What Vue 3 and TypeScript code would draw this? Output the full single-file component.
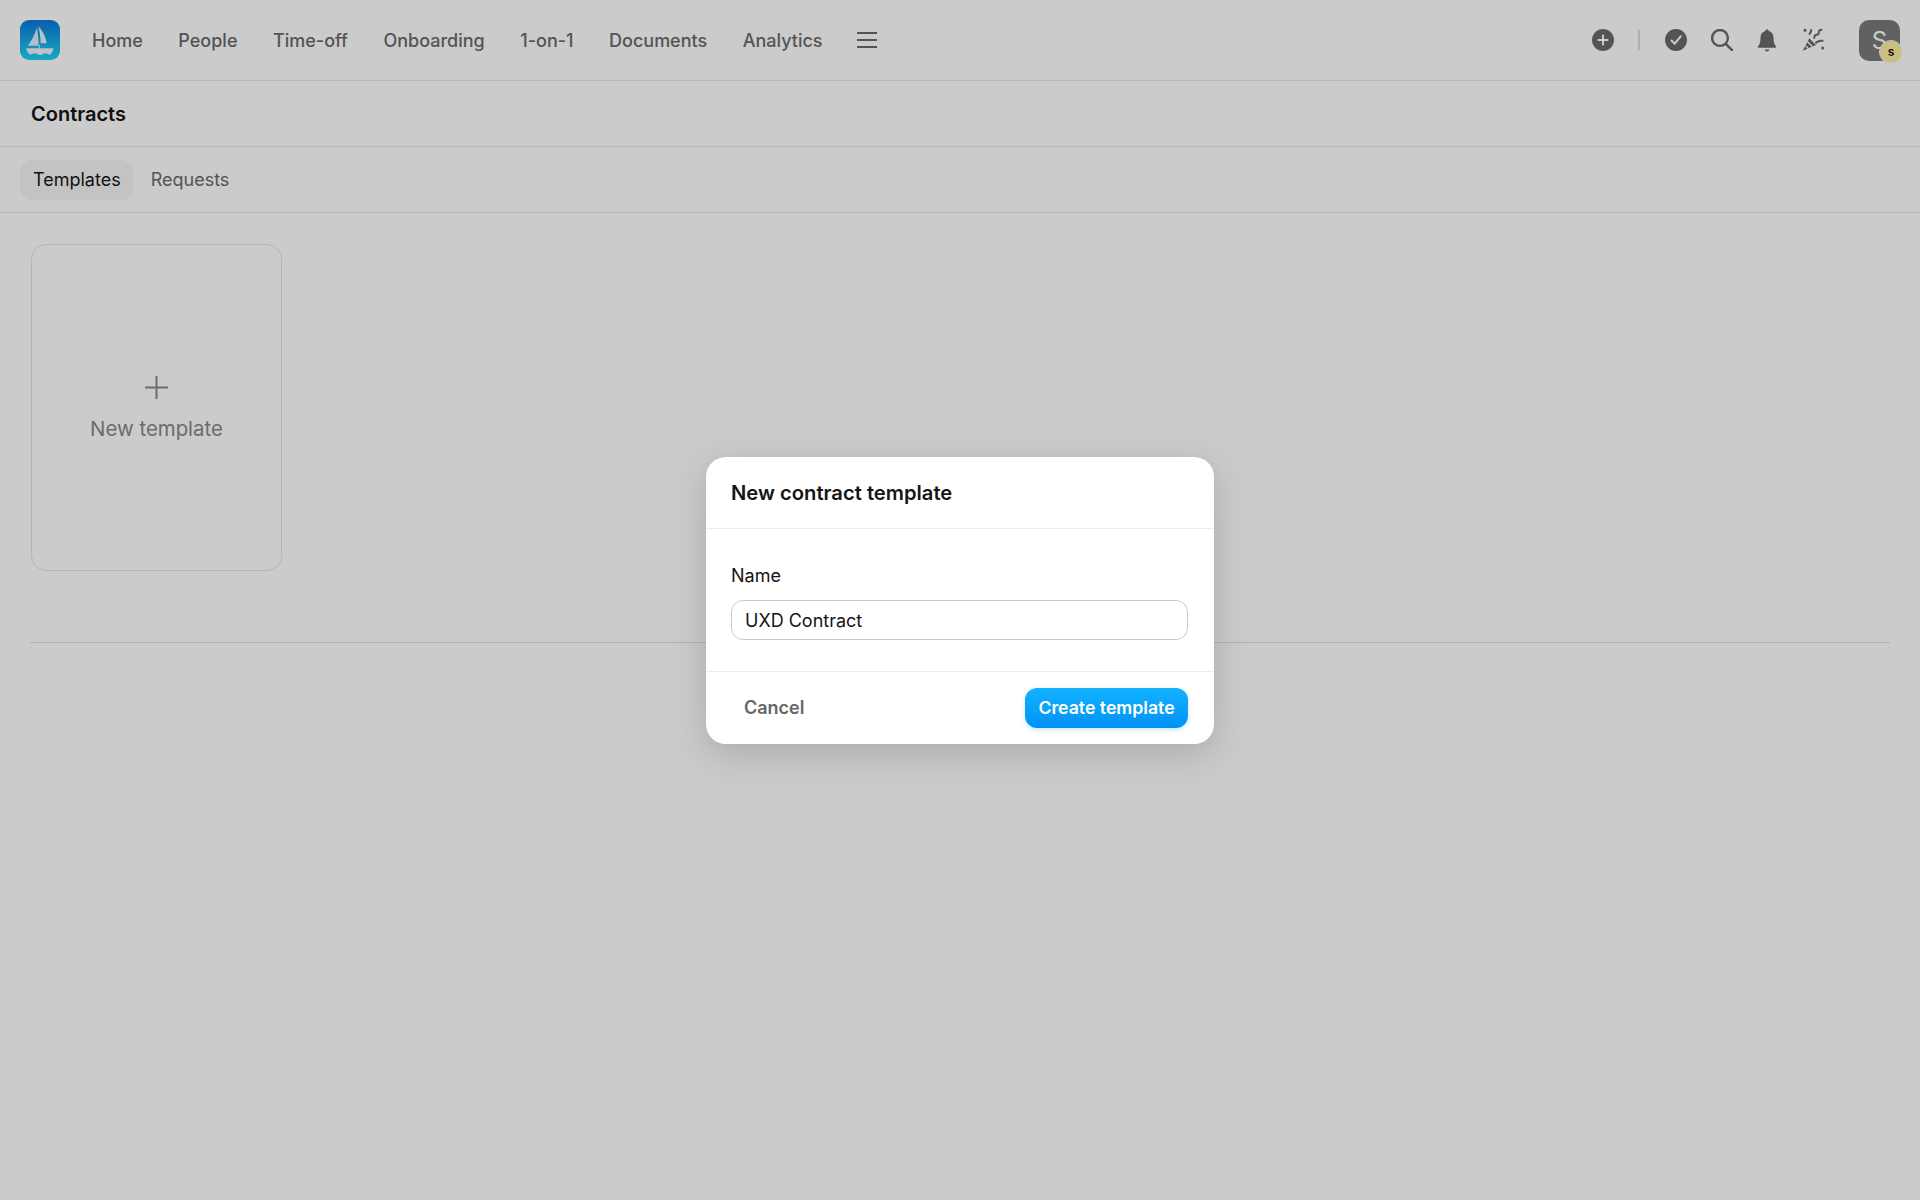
<script setup lang="ts">
const navItems: string[] = ['Home', 'People', 'Time-off', 'Onboarding', '1-on-1', 'Documents', 'Analytics']
</script>

<template>
  <div class="page">
    <header class="topbar">
      <svg class="logo" viewBox="0 0 40 40" aria-label="Logo">
        <defs>
          <linearGradient id="logoBg" x1="0" y1="0" x2="0" y2="1">
            <stop offset="0" stop-color="#0c78d8" />
            <stop offset="1" stop-color="#1ed6f4" />
          </linearGradient>
        </defs>
        <rect width="40" height="40" rx="9" fill="url(#logoBg)" />
        <path d="M18.200 6c4.300 4.500 7.500 10.500 8.500 17.300h-6c-.2-6-1-11.800-2.500-17.300z" fill="#e8f2fb" />
        <path d="M17 7.500c.9 6.200 1.500 12 1.700 18.200H7.700c4-5.200 7.300-11.300 9.300-18.200z" fill="#e2eef9" />
        <path d="M19.300 25v3.500" stroke="#e8f2fb" stroke-width="1" />
        <path d="M6 28.300h27.500c-.5 2.300-1.500 4.500-3.100 6.300-1.700.3-3-1.400-4.900-1.400-1.900 0-3.200 1.700-5.400 1.700s-3.500-1.700-5.400-1.700c-1.900 0-3 1.600-4.800 1.400-2-1.700-3.300-3.900-3.900-6.300z" fill="#eaf4fb" />
      </svg>
      <nav class="nav">
        <a v-for="item in navItems" :key="item" class="nav-link">{{ item }}</a>
        <svg class="hamburger" viewBox="0 0 20 18" aria-label="More">
          <path d="M0 2h20M0 9h20M0 16h20" stroke="#6a6a6a" stroke-width="2" fill="none" />
        </svg>
      </nav>
      <div class="actions">
        <svg class="icon plus-icon" viewBox="0 0 22 22">
          <circle cx="11" cy="11" r="11" fill="#6a6a6a" />
          <path d="M11 6.500v9M6.500 11h9" stroke="#fff" stroke-width="2" stroke-linecap="round" />
        </svg>
        <span class="separator"></span>
        <svg class="icon check-icon" viewBox="0 0 22 22">
          <circle cx="11" cy="11" r="11" fill="#6a6a6a" />
          <path d="M6.500 11.500l3.200 3.200 6-7.400" stroke="#fff" stroke-width="2" fill="none" stroke-linecap="round" stroke-linejoin="round" />
        </svg>
        <svg class="icon search-icon" viewBox="0 0 22 22">
          <circle cx="9" cy="9" r="7.900" stroke="#6a6a6a" stroke-width="2.400" fill="none" />
          <path d="M14.800 14.800l6 6" stroke="#6a6a6a" stroke-width="2.600" stroke-linecap="round" />
        </svg>
        <svg class="icon bell-icon" viewBox="0 0 20 23">
          <path d="M10 0.500c1 0 1.700.7 1.800 1.600 3 .8 4.700 3.300 4.700 6.400 0 4.500.8 7 2.300 8.400.7.700.3 1.800-.7 1.800H1.900c-1 0-1.400-1.100-.7-1.800C2.700 15.500 3.500 13 3.500 8.500c0-3.100 1.700-5.600 4.700-6.400.1-.9.800-1.600 1.800-1.600z" fill="#6a6a6a" />
          <path d="M7.500 20.500h5c-.3 1.100-1.300 1.900-2.500 1.900s-2.200-.8-2.500-1.900z" fill="#6a6a6a" />
        </svg>
        <svg class="icon party-icon" viewBox="0 0 24 24">
          <path d="M1.700 22.700l6.600-12.400 6.700 6.700z" fill="#6a6a6a" />
          <path d="M4.300 17.500l3 3M6.300 13.500l5 5" stroke="#fff" stroke-width="1.200" />
          <path d="M10.200 2c.2 1.600-.6 2.800-1.700 4M20.500 1.800c-1.800.2-2.900 1-2.700 2.600.1 1.500-1 2.500-2.300 2.400-1.200 0-2 1-2.300 3M21.500 12.800c-2.400-.4-4.500.2-6.500 1.800" stroke="#6a6a6a" stroke-width="2" fill="none" stroke-linecap="round" />
          <circle cx="4" cy="2.200" r="1.500" fill="#6a6a6a" />
          <circle cx="21.700" cy="20" r="1.500" fill="#6a6a6a" />
        </svg>
        <div class="avatar">
          <span class="avatar-letter">S</span>
          <span class="badge">s</span>
        </div>
      </div>
    </header>

    <div class="title-row">
      <h1 class="title">Contracts</h1>
    </div>

    <div class="tabs">
      <span class="tab tab-active">Templates</span>
      <span class="tab">Requests</span>
    </div>

    <main class="content">
      <div class="new-card">
        <svg class="card-plus" viewBox="0 0 23 23">
          <path d="M11.500 0v23M0 11.500h23" stroke="#888" stroke-width="2" />
        </svg>
        <span class="card-label">New template</span>
      </div>
      <hr class="divider" />
    </main>

    <div class="overlay">
      <section class="dialog">
        <div class="dialog-head">New contract template</div>
        <div class="dialog-body">
          <label class="field-label">Name</label>
          <div class="input">UXD Contract</div>
        </div>
        <div class="dialog-foot">
          <button class="btn-cancel">Cancel</button>
          <button class="btn-primary">Create template</button>
        </div>
      </section>
    </div>
  </div>
</template>

<style>
html, body { background: #fff; }
</style>

<style scoped>
.page {
  position: relative;
  height: 1200px;
  overflow: hidden;
  background: #fff;
  font-family: Inter, "Liberation Sans", sans-serif;
  color: #151515;
}
.topbar {
  display: flex;
  align-items: center;
  height: 80px;
  padding: 0 20px;
  border-bottom: 1px solid #e8e8e8;
}
.logo { width: 40px; height: 40px; flex: none; }
.nav {
  display: flex;
  align-items: center;
  gap: 35.500px;
  margin-left: 32px;
}
.nav-link {
  font-size: 18px;
  font-weight: 500;
  color: #6a6a6a;
}
.hamburger { width: 20px; height: 18px; margin-left: -1px; }
.actions {
  display: flex;
  align-items: center;
  margin-left: auto;
}
.icon { display: block; flex: none; }
.plus-icon { width: 22px; height: 22px; }
.separator {
  width: 2px;
  height: 20px;
  background: #dcdcdc;
  margin: 0 25px 0 24px;
}
.check-icon { width: 22px; height: 22px; }
.search-icon { width: 22px; height: 22px; margin-left: 24px; }
.bell-icon { width: 20px; height: 23px; margin-left: 24px; }
.party-icon { width: 24px; height: 24px; margin-left: 24px; }
.avatar {
  position: relative;
  width: 41px;
  height: 41px;
  margin-left: 34px;
  border-radius: 10px;
  background: #7a7a7a;
  display: flex;
  align-items: center;
  justify-content: center;
}
.avatar-letter { color: #fff; font-size: 24px; font-weight: 400; }
.badge {
  position: absolute;
  right: -2px;
  bottom: -2px;
  width: 22px;
  height: 22px;
  border-radius: 50%;
  background: #fff0a0;
  color: #151515;
  font-size: 12px;
  font-weight: 600;
  display: flex;
  align-items: center;
  justify-content: center;
  outline: 1px solid #fff;
}
.title-row {
  height: 65px;
  display: flex;
  align-items: center;
  padding-left: 31px;
  border-bottom: 1px solid #e8e8e8;
}
.title { margin: 0; font-size: 20px; font-weight: 600; color: #151515; }
.tabs {
  height: 65px;
  display: flex;
  align-items: center;
  gap: 5px;
  padding-left: 20px;
  border-bottom: 1px solid #e8e8e8;
}
.tab {
  height: 40px;
  display: flex;
  align-items: center;
  padding: 0 12px 0 13px;
  border-radius: 12px;
  font-size: 18px;
  color: #6a6a6a;
}
.tab-active { background: #f5f5f5; color: #151515; }
.content { padding: 31px 30px 0; }
.new-card {
  width: 251px;
  height: 327px;
  margin-left: 1px;
  box-sizing: border-box;
  border: 1px solid #e4e4e4;
  border-radius: 15px;
  padding-top: 2px;
  display: flex;
  flex-direction: column;
  align-items: center;
  justify-content: center;
  gap: 17px;
}
.card-plus { width: 23px; height: 23px; }
.card-label { font-size: 20.400px; color: #888; }
.divider {
  border: 0;
  border-top: 1px solid #e0e0e0;
  margin: 71px 0 0;
}
.overlay {
  position: absolute;
  inset: 0;
  background: rgba(0, 0, 0, 0.205);
  display: flex;
  align-items: center;
  justify-content: center;
}
.dialog {
  width: 508px;
  background: #fff;
  border-radius: 20px;
  box-shadow: 0 10px 36px rgba(0, 0, 0, 0.16);
}
.dialog-head {
  height: 72px;
  box-sizing: border-box;
  padding: 1px 26px 0 25px;
  display: flex;
  align-items: center;
  font-size: 20.200px;
  font-weight: 600;
  color: #151515;
  border-bottom: 1px solid #ececec;
}
.dialog-body {
  padding: 36px 26px 31px 25px;
  border-bottom: 1px solid #ececec;
}
.field-label {
  display: block;
  font-size: 18px;
  font-weight: 400;
  line-height: 22px;
  color: #151515;
}
.input {
  margin-top: 13px;
  height: 40px;
  box-sizing: border-box;
  border: 1px solid #c9c9c9;
  border-radius: 12px;
  padding: 2px 13px 0;
  display: flex;
  align-items: center;
  font-size: 18px;
  color: #151515;
}
.dialog-foot {
  display: flex;
  justify-content: space-between;
  align-items: center;
  padding: 16px 26px 16px 25px;
}
button { font-family: inherit; border: 0; cursor: pointer; }
.btn-cancel {
  background: none;
  padding: 0 13px;
  height: 40px;
  font-size: 18px;
  font-weight: 600;
  color: #666;
}
.btn-primary {
  height: 40px;
  width: 163px;
  padding: 0;
  border-radius: 12px;
  font-size: 17.700px;
  font-weight: 600;
  color: #fff;
  background: linear-gradient(#14b2ff, #0092f7);
  box-shadow: 0 2px 5px rgba(0, 130, 240, 0.2);
}
</style>
